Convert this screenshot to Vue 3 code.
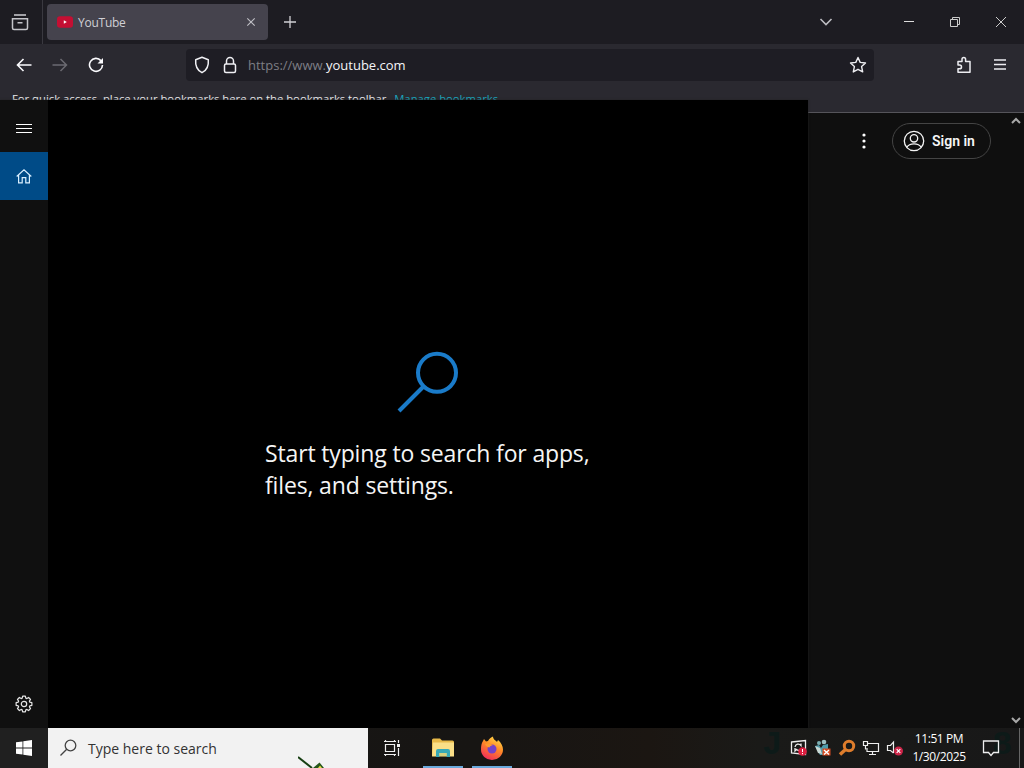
<template>
  <div class="desktop">
    <div class="browser">
      <div class="tab-bar">
        <div class="recent">
          <svg width="18" height="18" viewBox="0 0 18 18" fill="none" stroke="#c4c4c9" stroke-width="1.5">
            <path d="M3 2h12" stroke-width="1.6" />
            <path d="M1.5 5.700h15v9.300q0 1.500-1.500 1.500H3q-1.500 0-1.500-1.500zM6.500 9.700h5" />
          </svg>
        </div>
        <div class="tab">
          <svg class="favicon" width="16" height="16" viewBox="0 0 16 16">
            <rect y="2.3" width="16" height="11.4" rx="3" fill="#c40f33" />
            <path d="M6.800 6.200v3.600L9.800 8z" fill="#fff" />
          </svg>
          <span class="tab-title">YouTube</span>
          <svg width="10" height="10" viewBox="0 0 10 10" stroke="#c0c0c6" stroke-width="1.1">
            <path d="M1.300 1.300l7.400 7.400M8.700 1.300L1.300 8.700" />
          </svg>
        </div>
        <svg class="new-tab" width="14" height="14" viewBox="0 0 14 14" stroke="#d0d0d5" stroke-width="1.3">
          <path d="M7 1v12M1 7h12" />
        </svg>
        <svg class="all-tabs" width="14" height="10" viewBox="0 0 14 10" fill="none" stroke="#bdbdc2" stroke-width="1.6">
          <path d="M1.5 2L7 7.5 12.500 2" />
        </svg>
        <div class="window-buttons">
          <svg width="12" height="12" viewBox="0 0 12 12"><path d="M1 5.500h10" stroke="#ddd" /></svg>
          <svg width="12" height="12" viewBox="0 0 12 12" fill="none" stroke="#ccc">
            <path d="M1.500 3.500h7v7h-7zM3.500 3.500v-2h7v7h-2" />
          </svg>
          <svg width="12" height="12" viewBox="0 0 12 12"><path d="M1 1l10 10M11 1L1 11" stroke="#ccc" /></svg>
        </div>
      </div>

      <div class="nav-bar">
        <div class="nav-buttons">
          <svg width="16" height="16" viewBox="0 0 16 16" fill="none" stroke="#fbfbfe" stroke-width="1.6">
            <path d="M15.500 8H1.500M7.500 2L1.500 8l6 6" />
          </svg>
          <svg width="16" height="16" viewBox="0 0 16 16" fill="none" stroke="#6b6a71" stroke-width="1.500">
            <path d="M.5 8h14M8.500 2l6 6-6 6" />
          </svg>
          <svg width="16" height="16" viewBox="0 0 16 16" fill="none" stroke="#fbfbfe" stroke-width="1.6">
            <path d="M12.900 3.600A6.500 6.500 0 1 0 14.500 8" />
            <path d="M15 1v5.500H9.500z" fill="#fbfbfe" stroke="none" />
          </svg>
        </div>
        <div class="url-bar">
          <svg width="16" height="18" viewBox="0 0 16 18" fill="none" stroke="#f0f0f4" stroke-width="1.500" stroke-linejoin="round">
            <path d="M8 1.300l6.300 2.400c.5 5.500-1 10.300-6.300 13C2.700 14 1.200 9.200 1.700 3.700z" />
          </svg>
          <svg width="14" height="18" viewBox="0 0 14 18" fill="none" stroke="#f0f0f4" stroke-width="1.500">
            <rect x="1.500" y="8" width="11" height="8.500" rx="1.500" />
            <path d="M3.500 8V5a3.500 3.500 0 0 1 7 0v3" />
          </svg>
          <span class="url"><span class="dim">https://www.</span>youtube.com</span>
          <svg width="18" height="18" viewBox="0 0 18 18" fill="none" stroke="#ededf1" stroke-width="1.400" stroke-linejoin="round">
            <path d="M9 1.500l2.200 4.900 5.300.6-3.900 3.600 1.100 5.300L9 13.300l-4.700 2.600 1.100-5.300L1.500 7l5.300-.6z" />
          </svg>
        </div>
        <div class="nav-tools">
          <svg width="16" height="18" viewBox="0 0 16 18" fill="none" stroke="#ededf1" stroke-width="1.500" stroke-linejoin="round">
            <path d="M2 5.500h4V3.300a1.800 1.800 0 0 1 3.600 0v2.200h4.400v10.700H2v-3.400h1.600a1.900 1.900 0 0 0 0-3.800H2z" />
          </svg>
          <svg width="14" height="14" viewBox="0 0 14 14" stroke="#ededf1" stroke-width="1.400">
            <path d="M1 2h12M1 6.500h12M1 11h12" />
          </svg>
        </div>
      </div>

      <div class="bookmarks">
        <span class="bookmarks-hint">For quick access, place your bookmarks here on the bookmarks toolbar.</span>
        <span class="bookmarks-link">Manage bookmarks</span>
      </div>

      <div class="page">
        <div class="page-header">
          <svg width="4" height="16" viewBox="0 0 4 16" fill="#fff">
            <circle cx="2" cy="2" r="1.600" /><circle cx="2" cy="8" r="1.600" /><circle cx="2" cy="14" r="1.600" />
          </svg>
          <button class="sign-in">
            <svg width="22" height="22" viewBox="0 0 22 22" fill="none" stroke="#f4f4f4" stroke-width="1.300">
              <circle cx="11" cy="11" r="9.700" />
              <circle cx="11" cy="8.300" r="3.700" />
              <path d="M3.700 17.300c1.600-2.600 4.200-3.500 7.300-3.500s5.700.9 7.300 3.500" />
            </svg>
            <span>Sign in</span>
          </button>
        </div>
        <div class="scrollbar">
          <svg width="10" height="8" viewBox="0 0 10 8" fill="none" stroke="#a8a8a8" stroke-width="2"><path d="M1 6l4-4 4 4" /></svg>
          <svg width="10" height="8" viewBox="0 0 10 8" fill="none" stroke="#a8a8a8" stroke-width="2"><path d="M1 2l4 4 4-4" /></svg>
        </div>
      </div>
    </div>

    <!-- search flyout over the browser -->
    <div class="flyout">
      <div class="rail">
        <div class="rail-item">
          <svg width="16" height="16" viewBox="0 0 16 16" stroke="#fff"><path d="M0 4.500h16M0 8.500h16M0 12.500h16" /></svg>
        </div>
        <div class="rail-item active">
          <svg width="16" height="16" viewBox="0 0 16 16" fill="none" stroke="#d9efff" stroke-width="1.200">
            <path d="M.7 8.500L8 1.800 15.300 8.500M2.600 7.300v7.600h3.600V9.700h3.600v5.200h3.600V7.300" />
          </svg>
        </div>
        <div class="rail-item last">
          <svg width="18" height="18" viewBox="0 0 18 18" fill="none" stroke="#e6e6e6" stroke-width="1.200" stroke-linejoin="round">
            <path :d="gearPath" />
            <circle cx="9" cy="9" r="2.700" />
          </svg>
        </div>
      </div>
      <div class="prompt">
        <svg width="62" height="62" viewBox="0 0 62 62" fill="none" stroke="#1a7bc9" stroke-width="4">
          <circle cx="40" cy="21.800" r="19" />
          <path d="M26.500 35.500L2 60" />
        </svg>
        <div class="prompt-text">
          <div class="line-one">Start typing to search for apps,</div>
          <div class="line-two">files, and settings.</div>
        </div>
      </div>
    </div>

    <div class="taskbar">
      <div class="start">
        <svg width="16" height="16" viewBox="0 0 16 16" fill="#fff">
          <path d="M0 2.300L6.500 1.400v6.200H0zM7.300 1.300L16 0v7.600H7.300zM0 8.400h6.500v6.200L0 13.700zM7.300 8.400H16V16l-8.700-1.300z" />
        </svg>
      </div>
      <div class="search-box">
        <svg width="18" height="18" viewBox="0 0 18 18" fill="none" stroke="#444" stroke-width="1.300">
          <circle cx="10.500" cy="6.500" r="5.300" /><path d="M6.700 10.300L.500 16.500" />
        </svg>
        <span class="search-text">Type here to search</span>
        <svg class="scribble" width="30" height="12" viewBox="0 0 30 12">
          <path d="M0 1l14 11" stroke="#173f12" stroke-width="2" />
          <path d="M15 12l6.500-5.500L26 12z" fill="#24551a" /><path d="M20 12l2-2.500 2 2.500z" fill="#e8df45" />
        </svg>
      </div>
      <div class="task">
        <svg width="17" height="16" viewBox="0 0 17 16" fill="none" stroke="#eee" stroke-width="1.200">
          <path d="M0 1.500h12M0 14.500h12M1.500 4.500h9v7h-9zM1.500 0v1.500M10.500 0v1.500M1.500 14.500V16M10.500 14.500V16M14.500 0v3M14.500 8v8" />
          <path d="M13 4h3v3h-3z" fill="#eee" stroke="none" />
        </svg>
      </div>
      <div class="task running explorer">
        <svg width="22" height="20" viewBox="0 0 22 20">
          <path d="M0 2q0-1.500 1.500-1.500H8l2 2h10.500Q22 2.500 22 4v14H0z" fill="#e8b949" />
          <path d="M1 4.500h21v14H0z" fill="#fbdf87" />
          <path d="M4 19v-6q0-2 2-2h10q2 0 2 2v6h-3.500v-4h-7v4z" fill="#37a9b8" />
          <path d="M7.500 15h7v3h-7z" fill="#d6d080" />
        </svg>
      </div>
      <div class="task running">
        <svg width="24" height="24" viewBox="0 0 24 24">
          <defs>
            <linearGradient id="fox" x1=".8" y1="0" x2=".3" y2="1">
              <stop offset="0" stop-color="#ffe34a" /><stop offset=".45" stop-color="#ff8a27" /><stop offset="1" stop-color="#f12b5b" />
            </linearGradient>
          </defs>
          <path d="M3 5l1-2 2 2.500L8 5c1-2 3-4 5-4.500 0 3 2.500 3.500 4 5.500l1-2c3 2.500 5 6 5 9.500a11 10.500 0 0 1-22 0C1 10 1.500 7 3 5z" fill="url(#fox)" />
          <circle cx="12" cy="13" r="4.500" fill="#7442c8" />
          <path d="M5 8c3-1 5 0 8 1-2 .5-3 1-3.500 2.500C7 11 5.500 10 5 8z" fill="#ff9a2d" />
        </svg>
      </div>
      <span class="wallpaper-mark mark-start">J</span>
      <span class="wallpaper-mark mark-end">8</span>
      <div class="tray">
        <svg width="18" height="18" viewBox="0 0 18 18" fill="none">
          <path d="M1.500 3l14-1.500v14L1.500 14z" stroke="#eee" stroke-width="1.300" />
          <path d="M5 8c.5-3 4-4 6-1.500V4.500M5 9v3l1.500-1.500c1 1 2 1 3 .8" stroke="#eee" stroke-width="1.300" />
          <circle cx="12.500" cy="12.500" r="4.300" fill="#dc1f40" /><path d="M12.500 10v3M12.500 14v1.200" stroke="#fff" />
        </svg>
        <svg width="18" height="18" viewBox="0 0 18 18">
          <circle cx="5" cy="4" r="2" fill="#79aeb2" /><circle cx="10" cy="3" r="2.300" fill="#a0c2c3" />
          <path d="M1 7l4-1 2 3 2-3 5-1v5l-4 6H6z" fill="#4e9baa" />
          <path d="M1 7l5 2 2 6-4-1z" fill="#c8d8d4" />
          <path d="M8.500 9.500h8v7h-8z" fill="#d64b20" /><path d="M10 11l5 4.500M15 11l-5 4.500" stroke="#fff" stroke-width="1.400" />
        </svg>
        <svg width="18" height="18" viewBox="0 0 18 18" fill="none" stroke="#df7d2c">
          <circle cx="11" cy="7" r="4.700" stroke-width="3" /><path d="M7.500 10.500L2 15.500" stroke-width="3.500" />
        </svg>
        <svg width="18" height="18" viewBox="0 0 18 18" fill="none" stroke="#eee" stroke-width="1.200">
          <path d="M6 4.500h10.500v8H5V9M10.500 12.500v3M7 15.500h7M1.500 2.500h4v4h-4zM3.500 6.500v4" />
        </svg>
        <svg width="18" height="18" viewBox="0 0 18 18" fill="none" stroke="#eee" stroke-width="1.200">
          <path d="M7.500 14V3L4.500 6.500H1.500v5h3L7.500 14" />
          <circle cx="12.500" cy="12" r="4.500" fill="#cc2548" stroke="none" /><path d="M10.700 10.200l3.600 3.600M14.300 10.200l-3.600 3.600" stroke="#fff" />
        </svg>
      </div>
      <div class="clock">
        <span class="time">11:51 PM</span>
        <span class="date">1/30/2025</span>
      </div>
      <svg class="notifications" width="18" height="17" viewBox="0 0 18 17" fill="none" stroke="#eee" stroke-width="1.300">
        <path d="M1.500 1h15v11.500h-5L9 15.500l-2.500-3h-5z" />
      </svg>
      <div class="show-desktop"></div>
    </div>
  </div>
</template>

<script setup>
// outline of the settings gear, eight teeth around the centre
const teeth = 8
const points = []
for (let i = 0; i < teeth; i++) {
  const step = (Math.PI * 2) / teeth
  const corners = [[-0.3, 6.1], [-0.17, 8], [0.17, 8], [0.3, 6.1]]
  for (const [offset, radius] of corners) {
    const angle = i * step + offset
    points.push(`${(9 + radius * Math.sin(angle)).toFixed(2)} ${(9 - radius * Math.cos(angle)).toFixed(2)}`)
  }
}
const gearPath = `M${points.join('L')}Z`
</script>

<style>
body {
  background: #000;
  overflow: hidden;
}
</style>

<style scoped>
.desktop {
  position: relative;
  width: 1024px;
  height: 768px;
  display: flex;
  flex-direction: column;
  overflow: hidden;
  font-family: "Open Sans", "Noto Sans", sans-serif;
  color: #fff;
  white-space: nowrap;
}

svg {
  display: block;
  flex: none;
}

.browser {
  flex: 1;
  display: flex;
  flex-direction: column;
}

/* Tabs */
.tab-bar {
  height: 44px;
  display: flex;
  align-items: center;
  background: #1d1c22;
}

.recent {
  width: 43px;
  height: 44px;
  box-sizing: border-box;
  padding-left: 11px;
  display: flex;
  align-items: center;
  border-right: 1px solid #3a3940;
}

.tab {
  width: 221px;
  height: 36px;
  margin-left: 4px;
  padding: 0 12px 0 10px;
  box-sizing: border-box;
  display: flex;
  align-items: center;
  border-radius: 4px;
  background: #45434d;
}

.tab-title {
  flex: 1;
  margin-left: 5px;
  padding-top: 1px;
  font-size: 12px;
  letter-spacing: -0.25px;
  color: #d0d0d5;
}

.new-tab {
  margin-left: 15px;
}

.all-tabs {
  margin-left: auto;
}

.window-buttons {
  display: flex;
  gap: 34px;
  margin: 0 17px 0 70px;
}

/* Address bar */
.nav-bar {
  height: 42px;
  padding-bottom: 1px;
  box-sizing: border-box;
  display: flex;
  align-items: center;
  background: #2a2930;
}

.nav-buttons {
  display: flex;
  gap: 20px;
  width: 170px;
  padding-left: 16px;
}

.url-bar {
  width: 688px;
  height: 32px;
  box-sizing: border-box;
  padding: 0 7px 0 8px;
  display: flex;
  align-items: center;
  border-radius: 4px;
  background: #1e1d24;
}

.url-bar svg + svg {
  margin-left: 13px;
}

.url {
  flex: 1;
  margin-left: 11px;
  padding-top: 1px;
  font-size: 13px;
  color: #f4f4f7;
}

.dim {
  color: #7d7d84;
}

.nav-tools {
  flex: 1;
  display: flex;
  align-items: center;
  justify-content: flex-end;
  gap: 21px;
  padding-right: 17px;
}

.bookmarks {
  height: 26px;
  box-sizing: border-box;
  padding: 4px 0 0 12px;
  display: flex;
  gap: 5px;
  background: #2a2930;
  font-size: 11.280px;
  line-height: 18px;
  color: #e9e9ed;
}

.bookmarks-link {
  color: #1ba5bd;
}

.page {
  flex: 1;
  display: flex;
  justify-content: flex-end;
  border-top: 1px solid #55545a;
  background: #0f0f0f;
}

.page-header {
  height: 56px;
  display: flex;
  align-items: center;
  gap: 26px;
}

.sign-in {
  width: 99px;
  height: 36px;
  padding: 0 0 0 10px;
  display: flex;
  align-items: center;
  gap: 7px;
  border: 1px solid #444;
  border-radius: 18px;
  background: transparent;
  color: #f6f6f6;
  font: 600 14px Roboto, sans-serif;
}

.scrollbar {
  width: 33px;
  box-sizing: border-box;
  padding: 4px 3px 4px 0;
  display: flex;
  flex-direction: column;
  align-items: flex-end;
  justify-content: space-between;
}

/* Search flyout */
.flyout {
  position: absolute;
  left: 0;
  top: 100px;
  width: 808px;
  height: 628px;
  display: flex;
  background: #000;
  box-shadow: 0 0 2px #222;
}

.rail {
  width: 48px;
  display: flex;
  flex-direction: column;
  padding-top: 4px;
  box-sizing: border-box;
  background: #101010;
}

.rail-item {
  height: 48px;
  display: flex;
  align-items: center;
  justify-content: center;
}

.active {
  background: #004b87;
}

.last {
  margin-top: auto;
}

.prompt {
  flex: 1;
  padding-top: 251px;
  display: flex;
  flex-direction: column;
  align-items: center;
}

.prompt-text {
  width: 326px;
  margin-top: 24px;
  font-size: 23px;
  line-height: 32px;
  letter-spacing: -0.15px;
  color: #f5f5f5;
}

/* Taskbar */
.taskbar {
  position: relative;
  height: 40px;
  display: flex;
  align-items: center;
  background: linear-gradient(90deg, #171615 0, #171513 480px, #1b1612 650px, #1a1a18 760px, #181818 1024px);
}

.start {
  width: 48px;
  height: 40px;
  display: flex;
  align-items: center;
  justify-content: center;
  background: #202020;
}

.search-box {
  position: relative;
  width: 320px;
  height: 40px;
  box-sizing: border-box;
  padding-left: 12px;
  display: flex;
  align-items: center;
  gap: 10px;
  background: #f2f2f2;
  color: #333;
}

.search-text {
  font-size: 14px;
}

.scribble {
  position: absolute;
  left: 250px;
  bottom: 0;
}

.task {
  width: 40px;
  height: 40px;
  margin-left: 4px;
  box-sizing: border-box;
  display: flex;
  align-items: center;
  justify-content: center;
}

.running {
  margin-left: 9px;
  padding-top: 2px;
  border-bottom: 2px solid #6aa9dc;
}

.explorer {
  margin-left: 11px;
}

/* wallpaper lettering, dimmed by the translucent taskbar */
.wallpaper-mark {
  position: absolute;
  top: 0;
  font: bold 34px/34px "Liberation Mono", monospace;
  color: #0d1a18;
}

.mark-start {
  left: 762px;
}

.mark-end {
  left: 992px;
}

.tray {
  position: relative;
  display: flex;
  gap: 6px;
  margin-left: auto;
}

.clock {
  position: relative;
  width: 70px;
  display: flex;
  flex-direction: column;
  align-items: center;
  font-size: 12px;
  line-height: 18px;
  letter-spacing: -0.4px;
}

.notifications {
  position: relative;
  margin-left: 8px;
}

.show-desktop {
  position: relative;
  width: 5px;
  height: 40px;
  margin-left: 19px;
  box-sizing: border-box;
  border-left: 1px solid #666;
}
</style>
